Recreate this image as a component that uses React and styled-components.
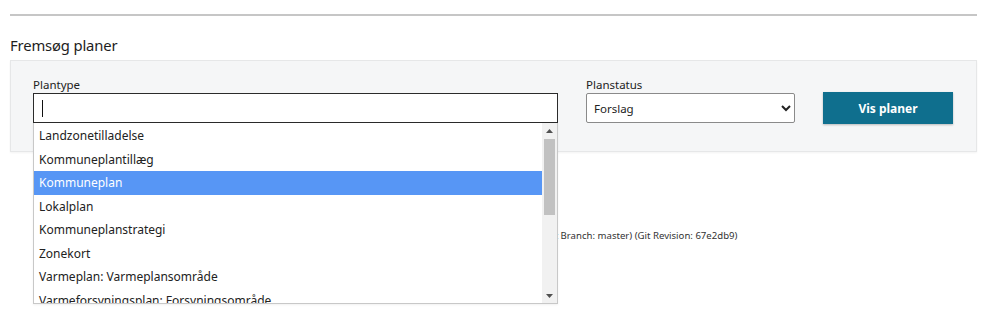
import React from "react";
import styled, { createGlobalStyle } from "styled-components";

const planTypes = [
  "Landzonetilladelse",
  "Kommuneplantillæg",
  "Kommuneplan",
  "Lokalplan",
  "Kommuneplanstrategi",
  "Zonekort",
  "Varmeplan: Varmeplansområde",
  "Varmeforsyningsplan: Forsyningsområde",
];

const Global = createGlobalStyle`
  body {
    margin: 0;
    background: #fff;
    font-family: "Noto Sans", "Open Sans", sans-serif;
    color: #222;
  }
`;

const Page = styled.div`
  min-height: 320px;
  padding: 0 15px 0 10px;
`;

const Rule = styled.div`
  height: 2px;
  margin-top: 14px;
  background: #c6c6c6;
`;

const Title = styled.h2`
  margin: 18px 0 4px;
  font-size: 14.8px;
  letter-spacing: -0.15px;
  line-height: 22px;
  font-weight: 400;
  color: #1e1e1e;
`;

const Panel = styled.section`
  background: #f5f6f7;
  border: 1px solid #e6e7e8;
  box-shadow: 0 1px 2px rgba(0, 0, 0, 0.05);
  padding: 17px 22px 28px;
`;

const Form = styled.div`
  display: flex;
  align-items: flex-end;
  gap: 28px;
`;

const Field = styled.div`
  position: relative;
  width: ${(p) => p.$width}px;
  display: flex;
  flex-direction: column;
`;

const Label = styled.label`
  font-size: 11.5px;
  line-height: 14px;
  margin-bottom: 1px;
  color: #222;
`;

const SearchBox = styled.div`
  height: 30px;
  box-sizing: border-box;
  border: 1px solid #2b2b2b;
  background: #fff;
  display: flex;
  align-items: center;
  padding-left: 8px;
`;

const Caret = styled.span`
  width: 1px;
  height: 17px;
  background: #111;
`;

const Select = styled.select`
  height: 30px;
  box-sizing: border-box;
  border: 1px solid #8a8a8a;
  border-radius: 2px;
  background: #fff;
  font-family: "Noto Sans", "Open Sans", sans-serif;
  font-size: 11.5px;
  color: #222;
  padding: 0 3px;
`;

const Button = styled.button`
  width: 130px;
  height: 32px;
  margin-bottom: -1px;
  border: none;
  background: #0f6f8e;
  color: #fff;
  font-family: "Noto Sans", "Open Sans", sans-serif;
  font-weight: 700;
  font-size: 12px;
  box-shadow: 0 1px 2px rgba(0, 0, 0, 0.25);
  cursor: pointer;
`;

const List = styled.div`
  position: absolute;
  top: 100%;
  left: 0;
  width: 100%;
  height: 181px;
  box-sizing: border-box;
  background: #fff;
  border: 1px solid #c8c8c8;
  border-top: none;
  display: flex;
  z-index: 5;
  box-shadow: 0 1px 2px rgba(0, 0, 0, 0.06);
`;

const Options = styled.ul`
  flex: 1;
  margin: 0;
  padding: 1px 0 0;
  list-style: none;
  overflow: hidden;
`;

const Option = styled.li`
  height: 23.5px;
  line-height: 23.5px;
  padding-left: 5px;
  font-size: 12px;
  white-space: nowrap;
  background: ${(p) => (p.$active ? "#5796f5" : "transparent")};
  color: ${(p) => (p.$active ? "#fff" : "#222")};
`;

const Scrollbar = styled.div`
  width: 15px;
  background: #f1f1f1;
  display: flex;
  flex-direction: column;
  align-items: center;
`;

const Arrow = styled.div`
  height: 15px;
  width: 15px;
  display: flex;
  align-items: center;
  justify-content: center;
`;

const Thumb = styled.div`
  width: 11px;
  height: 76px;
  margin-top: 1px;
  background: #c1c1c1;
`;

const Track = styled.div`
  flex: 1;
`;

const Footer = styled.div`
  margin-top: 76px;
  padding-left: 466px;
  font-size: 9.6px;
  line-height: 15px;
  color: #333;
`;

function ArrowIcon({ down }) {
  return (
    <svg width="7" height="4" viewBox="0 0 7 4">
      <path d={down ? "M0 0h7L3.5 4z" : "M0 4h7L3.5 0z"} fill="#505050" />
    </svg>
  );
}

export default function App() {
  return (
    <Page>
      <Global />
      <Rule />
      <Title>Fremsøg planer</Title>
      <Panel>
        <Form>
          <Field $width={525}>
            <Label>Plantype</Label>
            <SearchBox>
              <Caret />
            </SearchBox>
            <List>
              <Options>
                {planTypes.map((t) => (
                  <Option key={t} $active={t === "Kommuneplan"}>
                    {t}
                  </Option>
                ))}
              </Options>
              <Scrollbar>
                <Arrow>
                  <ArrowIcon />
                </Arrow>
                <Thumb />
                <Track />
                <Arrow>
                  <ArrowIcon down />
                </Arrow>
              </Scrollbar>
            </List>
          </Field>
          <Field $width={209}>
            <Label>Planstatus</Label>
            <Select defaultValue="Forslag">
              <option>Forslag</option>
              <option>Vedtaget</option>
              <option>Aflyst</option>
            </Select>
          </Field>
          <Button>Vis planer</Button>
        </Form>
      </Panel>
      <Footer>Plandata 2.3.0 (Git Branch: master) (Git Revision: 67e2db9)</Footer>
    </Page>
  );
}
